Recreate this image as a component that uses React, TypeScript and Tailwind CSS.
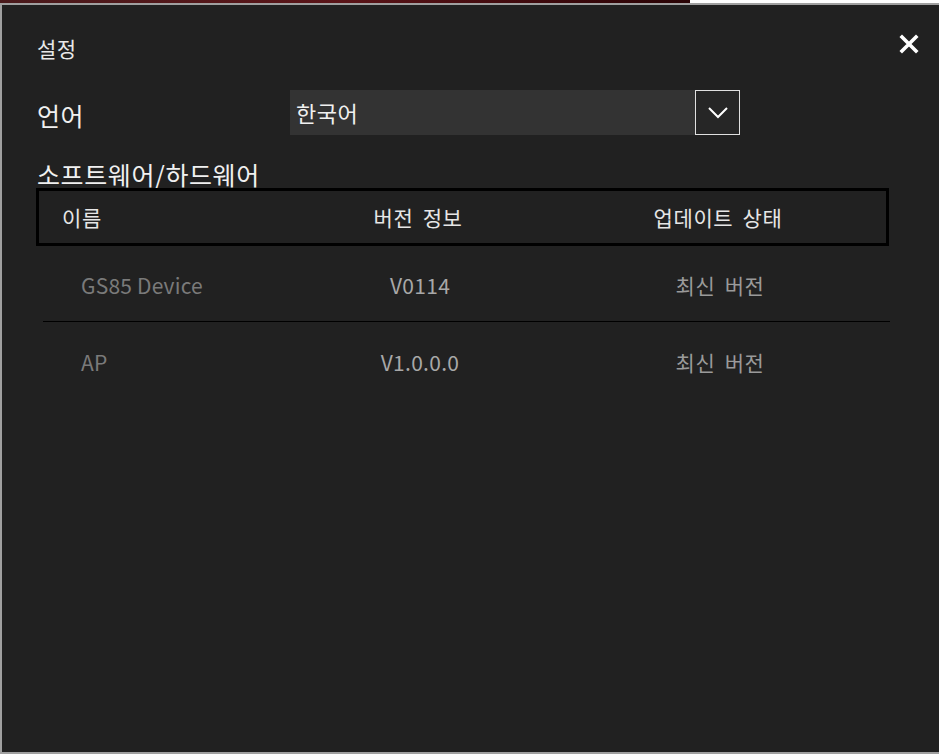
import React from "react";

const font = { fontFamily: '"Noto Sans CJK KR", "Noto Sans", sans-serif' };

export default function App() {
  const rows = [
    { name: "GS85 Device", ver: "V0114", status: "최신 버전" },
    { name: "AP", ver: "V1.0.0.0", status: "최신 버전" },
  ];
  return (
    <div className="w-[939px] h-[754px] overflow-hidden flex flex-col bg-[#212121]" style={font}>
      <div className="h-[3px] flex shrink-0">
        <div className="w-[690px] bg-gradient-to-r from-[#4a1a1c] via-[#5a1418] to-[#2a0406]" />
        <div className="flex-1 bg-white" />
      </div>
      <div className="flex-1 border-t-2 border-l-2 border-b-2 border-[#a0a0a0] bg-[#212121] flex flex-col">
        <div className="flex items-start justify-between pt-[29px] pl-[35px] pr-[20px]">
          <div className="text-[21px] leading-[28px] tracking-[0.5px] text-[#e8e8e8]">설정</div>
          <svg width="20" height="20" viewBox="0 0 20 20">
            <path d="M3 3 L17 17 M17 3 L3 17" stroke="#ffffff" strokeWidth="3.6" strokeLinecap="square" />
          </svg>
        </div>

        <div className="flex items-center mt-[28px] pl-[35px]">
          <div className="w-[253px] text-[25px] leading-[32px] tracking-[0.5px] text-[#f0f0f0] pt-[4px]">언어</div>
          <div className="w-[405px] h-[45px] bg-[#333333] flex items-center pl-[6px] text-[22px] tracking-[0.5px] text-[#f0f0f0]">
            한국어
          </div>
          <div className="w-[45px] h-[45px] border border-[#e0e0e0] bg-[#262626] flex items-center justify-center">
            <svg width="22" height="13" viewBox="0 0 22 13">
              <path d="M2 2 L11 11 L20 2" stroke="#ffffff" strokeWidth="2" fill="none" />
            </svg>
          </div>
        </div>

        <div className="mt-[25px] pl-[35px] text-[25px] leading-[28px] tracking-[0.6px] text-[#f0f0f0]">소프트웨어/하드웨어</div>

        <div className="ml-[34px] w-[853px] h-[58px] border-[3px] border-black flex items-center pt-[2px] text-[21px] tracking-[0.6px] [word-spacing:4px] text-[#e6e6e6]">
          <div className="w-[229px] pl-[23px]">이름</div>
          <div className="w-[300px] text-center">버전 정보</div>
          <div className="w-[300px] text-center">업데이트 상태</div>
        </div>

        {rows.map((r, i) => (
          <div
            key={r.name}
            className={
              "ml-[41px] w-[847px] h-[76px] flex items-center pt-[5px] text-[21px] " +
              (i === 0 ? "border-b border-black" : "")
            }
          >
            <div className="w-[227px] pl-[38px] text-[#7a7a7a] tracking-[0.2px]">{r.name}</div>
            <div className="w-[300px] text-center text-[#a8a8a8] tracking-[0.3px]">{r.ver}</div>
            <div className="w-[300px] text-center text-[#9a9a9a] tracking-[0.6px] [word-spacing:4px]">{r.status}</div>
          </div>
        ))}
      </div>
    </div>
  );
}
